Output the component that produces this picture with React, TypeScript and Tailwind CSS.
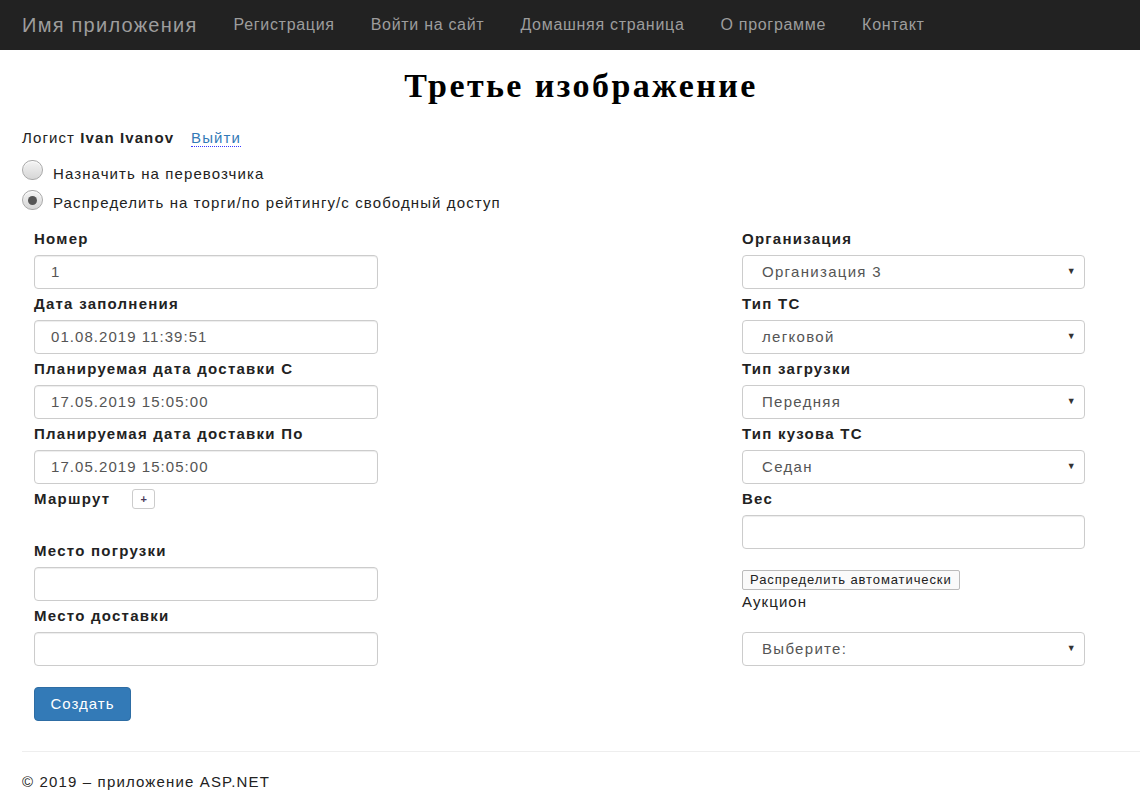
import React from 'react';

const navLinks = ['Регистрация', 'Войти на сайт', 'Домашняя страница', 'О программе', 'Контакт'];

function Radio({ checked }: { checked?: boolean }) {
    return (
        <span className="flex h-[20px] w-[21px] shrink-0 items-center justify-center rounded-full border border-[#a9a9a9] bg-gradient-to-b from-[#f4f4f4] to-[#d6d6d6] shadow-[inset_0_1px_1px_rgba(255,255,255,0.8)]">
            {checked ? <span className="h-[9px] w-[9px] rounded-full bg-[#555]" /> : null}
        </span>
    );
}

function Label({ children }: { children: React.ReactNode }) {
    return (
        <div className="h-[26px] text-[15px] font-bold leading-[20px] tracking-[1.25px] text-[#222]">{children}</div>
    );
}

function TextInput({ value }: { value?: string }) {
    return (
        <div className="flex h-[34px] items-center rounded-[4px] border border-[#ccc] bg-white pl-[16px] text-[15px] tracking-[1.05px] text-[#555] shadow-[inset_0_1px_1px_rgba(0,0,0,0.075)]">
            {value}
        </div>
    );
}

function Select({ value }: { value: string }) {
    return (
        <div className="flex h-[34px] items-center justify-between rounded-[4px] border border-[#ccc] bg-white pl-[19px] pr-[7px] text-[15px] tracking-[1.3px] text-[#555]">
            <span>{value}</span>
            <span className="text-[9px] text-[#333]">▼</span>
        </div>
    );
}

function Field({ label, children }: { label: string; children: React.ReactNode }) {
    return (
        <div className="mb-[5px]">
            <Label>{label}</Label>
            {children}
        </div>
    );
}

export default function App() {
    return (
        <div className="min-h-[797px] bg-white font-['Liberation_Sans',Arial,sans-serif] text-[#333]">
            <nav className="flex h-[50px] items-center bg-[#222] px-[22px]">
                <span className="mr-[36px] text-[20px] tracking-[1.25px] text-[#9d9d9d]">Имя приложения</span>
                <div className="flex gap-[36px] text-[16px] tracking-[0.7px] text-[#9d9d9d]">
                    {navLinks.map((l) => (
                        <span key={l}>{l}</span>
                    ))}
                </div>
            </nav>

            <main className="pl-[22px]">
                <h2 className="pt-[16px] text-center font-['Liberation_Serif','Times_New_Roman',serif] text-[34px] font-bold leading-[40px] tracking-[2.4px] text-black">
                    Третье изображение
                </h2>

                <div className="mt-[22px] flex items-center text-[15px] leading-[20px] tracking-[1.1px]">
                    <span className="text-[#222]">
                        Логист <b>Ivan Ivanov</b>
                    </span>
                    <span className="ml-[17px] border-b border-dotted border-[#3a3aff] leading-[16px] text-[#337ab7]">
                        Выйти
                    </span>
                </div>

                <div className="mt-[12px] flex items-start gap-[10px]">
                    <Radio />
                    <span className="pt-[4px] text-[15px] leading-[20px] tracking-[1.1px] text-[#222]">
                        Назначить на перевозчика
                    </span>
                </div>
                <div className="mt-[6px] flex items-start gap-[10px]">
                    <Radio checked />
                    <span className="pt-[3px] text-[15px] leading-[20px] tracking-[1.1px] text-[#222]">
                        Распределить на торги/по рейтингу/с свободный доступ
                    </span>
                </div>

                <div className="mt-[16px] flex pl-[12px] pr-[55px]">
                    <div className="w-[344px]">
                        <Field label="Номер">
                            <TextInput value="1" />
                        </Field>
                        <Field label="Дата заполнения">
                            <TextInput value="01.08.2019 11:39:51" />
                        </Field>
                        <Field label="Планируемая дата доставки С">
                            <TextInput value="17.05.2019 15:05:00" />
                        </Field>
                        <Field label="Планируемая дата доставки По">
                            <TextInput value="17.05.2019 15:05:00" />
                        </Field>
                        <div className="flex h-[52px] items-start">
                            <span className="text-[15px] font-bold leading-[20px] tracking-[1.25px] text-[#222]">
                                Маршрут
                            </span>
                            <span className="ml-[22px] flex h-[20px] w-[23px] items-center justify-center rounded-[3px] border border-[#ccc] bg-white text-[11px] font-bold text-[#4a3a5a]">
                                +
                            </span>
                        </div>
                        <Field label="Место погрузки">
                            <TextInput />
                        </Field>
                        <Field label="Место доставки">
                            <TextInput />
                        </Field>
                        <button className="mt-[16px] h-[34px] w-[97px] rounded-[4px] border border-[#2e6da4] bg-[#337ab7] text-[15px] tracking-[1px] text-white">
                            Создать
                        </button>
                    </div>

                    <div className="ml-auto w-[343px]">
                        <Field label="Организация">
                            <Select value="Организация 3" />
                        </Field>
                        <Field label="Тип ТС">
                            <Select value="легковой" />
                        </Field>
                        <Field label="Тип загрузки">
                            <Select value="Передняя" />
                        </Field>
                        <Field label="Тип кузова ТС">
                            <Select value="Седан" />
                        </Field>
                        <div>
                            <Label>Вес</Label>
                            <TextInput />
                        </div>
                        <button className="mt-[21px] flex h-[20px] items-center rounded-[2px] border border-[#bbb] bg-[#fafafa] px-[7px] text-[13px] tracking-[0.9px] text-[#222]">
                            Распределить автоматически
                        </button>
                        <div className="mt-[2px] text-[15px] leading-[20px] tracking-[1.1px] text-[#222]">Аукцион</div>
                        <div className="mt-[20px]">
                            <Select value="Выберите:" />
                        </div>
                    </div>
                </div>

                <hr className="mt-[30px] border-t border-[#eee]" />
                <footer className="pt-[20px] text-[15px] leading-[20px] tracking-[1.15px] text-[#222]">
                    © 2019 – приложение ASP.NET
                </footer>
            </main>
        </div>
    );
}
